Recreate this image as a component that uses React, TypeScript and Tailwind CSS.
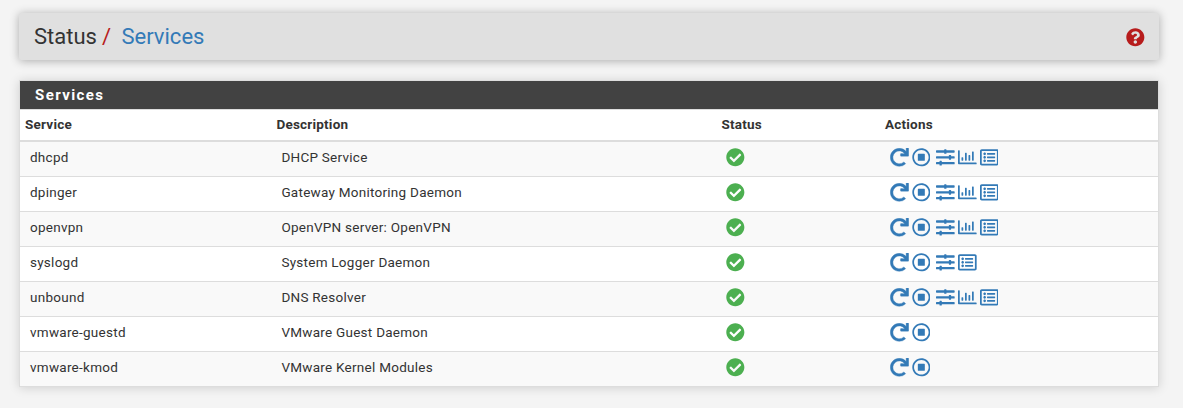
import {
  FaCheckCircle,
  FaQuestionCircle,
  FaRedo,
  FaRegChartBar,
  FaRegListAlt,
  FaRegStopCircle,
  FaSlidersH,
} from "react-icons/fa";

type Service = { name: string; description: string; settings?: boolean; chart?: boolean; log?: boolean };

const services: Service[] = [
  { name: "dhcpd", description: "DHCP Service", settings: true, chart: true, log: true },
  { name: "dpinger", description: "Gateway Monitoring Daemon", settings: true, chart: true, log: true },
  { name: "openvpn", description: "OpenVPN server: OpenVPN", settings: true, chart: true, log: true },
  { name: "syslogd", description: "System Logger Daemon", settings: true, log: true },
  { name: "unbound", description: "DNS Resolver", settings: true, chart: true, log: true },
  { name: "vmware-guestd", description: "VMware Guest Daemon" },
  { name: "vmware-kmod", description: "VMware Kernel Modules" },
];

const columns = "grid grid-cols-[251.4px_445px_163.6px_1fr]";
const icon = "h-[18.67px] w-[18.67px] shrink-0";

function ServiceRow({ service }: { service: Service }) {
  return (
    <div className={`${columns} h-[35px] border-b border-[#dddddd] leading-[30px] tracking-[0.26px] odd:bg-[#f9f9f9] last:h-[34px] last:border-b-0`}>
      <div className="pl-[10px]">{service.name}</div>
      <div className="pl-[10px]">{service.description}</div>
      <div className="flex h-[31px] items-center pl-[10px]">
        <FaCheckCircle className={`${icon} text-[#4caf50]`} />
      </div>
      <div className="flex h-[31px] items-center gap-[3px] pl-[10px] text-[#337ab7]">
        <FaRedo className={`${icon} stroke-[10px]`} />
        <FaRegStopCircle className={icon} />
        {service.settings && <FaSlidersH className={`${icon} ml-[3px]`} />}
        {service.chart && <FaRegChartBar className={icon} />}
        {service.log && <FaRegListAlt className={icon} />}
      </div>
    </div>
  );
}

export default function App() {
  return (
    <main className="h-[408px] overflow-hidden bg-[#f4f4f4] pt-[13px] pr-6 pl-[19px] font-['Roboto',sans-serif] text-[13.5px] text-[#333333]">
      <header className="flex h-[47px] items-center justify-between rounded-[2px] bg-[#e0e0e0] pr-[15px] pl-[15px] shadow-[0_1px_10px_rgba(0,0,0,0.3)]">
        <h1 className="flex text-[22px] leading-6">
          <span>Status</span>
          <span className="ml-[5px] text-[#b71c1c]">/</span>
          <a className="ml-[10.5px] text-[#337ab7]">Services</a>
        </h1>
        <FaQuestionCircle className={`${icon} mt-[2px] -mr-px text-[#b71c1c]`} />
      </header>
      <section className="mt-5 border border-[#dddddd] bg-white shadow-[0_1px_10px_rgba(0,0,0,0.15)]">
        <h2 className="h-[29px] border-b border-[#dddddd] bg-[#424242] pl-[15px] text-[15px] leading-[28px] font-bold tracking-[1.4px] text-white">Services</h2>
        <div className={`${columns} h-8 border-b-2 border-[#dddddd] pl-[5px] leading-[28px] font-bold tracking-[0.22px]`}>
          <div>Service</div>
          <div>Description</div>
          <div>Status</div>
          <div>Actions</div>
        </div>
        <div>
          {services.map((service) => (
            <ServiceRow key={service.name} service={service} />
          ))}
        </div>
      </section>
    </main>
  );
}
